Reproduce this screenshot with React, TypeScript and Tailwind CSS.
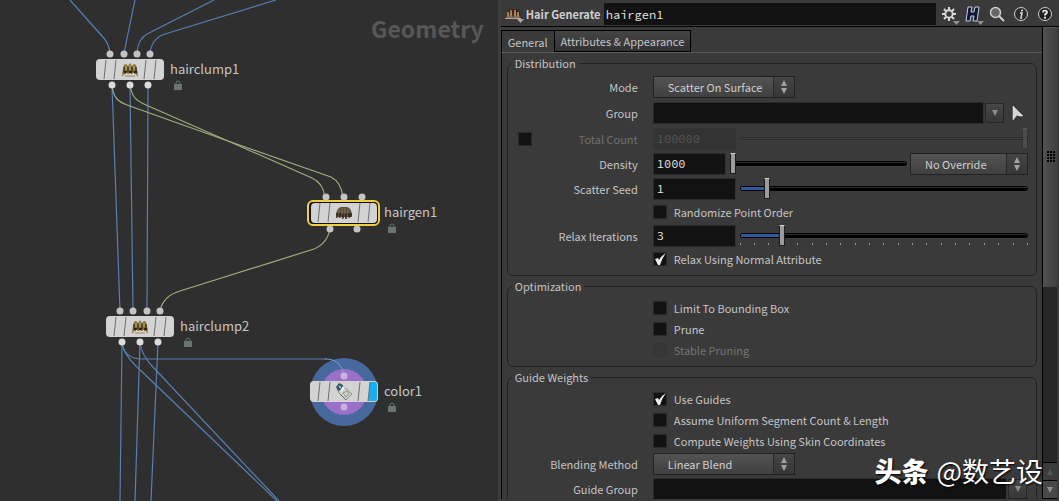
import { useState, type CSSProperties, type ReactNode } from 'react'

type NodeIconId = 'clump' | 'gen' | 'color'

interface NetNode {
  name: string
  x: number
  y: number
  inputs: number[]
  outputs: number[]
  icon: NodeIconId
  selected?: boolean
  display?: boolean
}

// x / y is the top left corner of the tile, connectors are offsets along it
const NODES: NetNode[] = [
  { name: 'hairclump1', x: 96, y: 59, inputs: [14, 28, 41, 54], outputs: [16, 34, 52], icon: 'clump' },
  { name: 'hairgen1', x: 310, y: 202, inputs: [16, 34, 52], outputs: [20, 47], icon: 'gen', selected: true },
  { name: 'hairclump2', x: 106, y: 316, inputs: [14, 27, 41, 54], outputs: [16, 34, 52], icon: 'clump' },
  { name: 'color1', x: 310, y: 381, inputs: [34], outputs: [34], icon: 'color', display: true },
]

const BLUE_WIRES = [
  'M70 0 L102 36 Q109 43 110 53',
  'M135 0 L124 53',
  'M214 0 L147 34 Q138 39 137 53',
  'M276 0 L165 34 Q152 38 150 53',
  'M112 85 L120 311',
  'M130 85 L133 311',
  'M148 85 L147 311',
  'M122 342 L120 501',
  'M140 342 L135 501',
  'M158 342 L151 501',
  'M122 342 Q122 352 136 366 L277 501',
  'M140 342 Q141 354 152 366 L279 501',
  'M122 342 Q124 359 142 359 H326',
]

const GREEN_WIRES = [
  'M112 85 C113 98 119 102 127 105 L228 141 L331 177 Q341 182 343 197',
  'M130 85 C132 98 137 101 146 105 L228 141 L312 178 Q323 183 325 197',
  'M330 228 Q328 243 314 249 L180 291 Q163 296 160 311',
]

function ClumpGlyph() {
  return (
    <g>
      <path d="M1 12 L3 3 L5 2 L7 4 L9 1 L11 4 L13 2 L15 3 L17 12 Z" fill="#85703a" />
      <path d="M3 10 V5 M7 10 V5 M11 10 V5 M15 10 V5" stroke="#4a3a1c" strokeWidth="1.5" />
      <path d="M3 10 H6 M8 10 H11 M13 10 H16" stroke="#2c2416" strokeWidth="2" />
      <path d="M5 4 V8 M9 3 V8 M13 4 V8" stroke="#c4ad6c" />
      <path d="M5 13 L6 11 M9 13 V11 M13 13 L12 11" stroke="#e2d8c0" strokeWidth="1.2" />
      <path d="M1 14 L3 12 M4 14 H14 M15 12 L17 14" stroke="#9d8250" strokeWidth="1.2" fill="none" />
    </g>
  )
}

function GenGlyph() {
  return (
    <g>
      <path d="M1 9 Q2 3 6 2 H12 Q16 3 17 9 L16 12 H2 Z" fill="#5a4e3c" />
      <path d="M2 8 V13 M5 8 V13 M8 9 V14 M11 9 V14 M14 8 V13 M16 8 V12" stroke="#32291c" strokeWidth="1.6" />
      <path d="M4 4 V8 M7 3 V8 M10 3 V8 M13 4 V8" stroke="#84745a" />
      <path d="M3 12 V14 M6 12 V14 M9 13 V14 M13 12 V14" stroke="#cfc5b5" />
    </g>
  )
}

function ColorGlyph() {
  return (
    <g>
      <path d="M2 3 L5 0 L9 3 L17 10 L11 16 L4 9 Z" fill="#cdd1ca" stroke="#87939a" strokeWidth="1" />
      <path d="M1 3 L4 -1 L8 1 L6 6 L3 7 Z" fill="#37586a" />
      <path d="M4 2 L6 4" stroke="#b9d5e0" strokeWidth="1.5" />
      <path d="M6 7 L9 3" stroke="#f2f8fa" strokeWidth="2" />
      <path d="M8 9 L12 7 L14 10 L11 13 Z" stroke="#8c9a80" fill="none" />
      <path d="M5 10 L11 16" stroke="#5a7080" strokeWidth="1" />
    </g>
  )
}

const NODE_GLYPHS: Record<NodeIconId, typeof ClumpGlyph> = {
  clump: ClumpGlyph,
  gen: GenGlyph,
  color: ColorGlyph,
}

function NodeTile({ node }: { node: NetNode }) {
  const Glyph = NODE_GLYPHS[node.icon]
  const dot = node.display ? '#c9b3dc' : '#c4c4c4'
  return (
    <div className="absolute" style={{ left: node.x, top: node.y }}>
      <svg width="68" height="22" className="block overflow-visible">
        {node.display && (
          <>
            <circle cx="34" cy="11" r="34" fill="#46689c" />
            <circle cx="34" cy="11" r="23" fill="#9a70c8" />
            <path d="M15 -22 H18 Q31 -21 34 -6" stroke="#7ba0d2" fill="none" />
          </>
        )}
        {node.selected && <rect x="-2" y="-1" width="71" height="24" rx="5" fill="#111" stroke="#f2cf3f" strokeWidth="2" />}
        {node.inputs.map(x => <circle key={x} cx={x} cy="-5" r="3.5" fill={dot} />)}
        {node.outputs.map(x => <circle key={x} cx={x} cy={node.selected ? 27 : 26} r="3.5" fill={node.display || node.selected ? dot : '#dcdcdc'} />)}
        <rect x={node.selected ? 1 : 0} y={node.selected ? 1 : 0} width={node.selected ? 66 : 68} height={node.selected ? 20 : 21} rx="4" fill="#d3d3d3" />
        {node.display && <path d="M60 1 H65 Q67 1 67 4 V17 Q67 20 65 20 H58 Z" fill="#18aef0" />}
        <path d="M10 1 L8 20 M20 1 L18 20 M50 1 L48 20 M60 1 L58 20" stroke="#6f6f6f" strokeWidth="1" />
        <g transform="translate(25 3)">
          <Glyph />
        </g>
      </svg>
      <span className="absolute left-[74px] top-0 text-[13px] leading-5 whitespace-nowrap text-[#c6c6c6]">{node.name}</span>
      <svg width="8" height="10" viewBox="0 0 8 10" className="absolute left-[78px] top-[21px]">
        <path d="M2 4 V3 a2 2 0 0 1 4 0 V4" fill="none" stroke="#69736f" />
        <rect x="0" y="4" width="8" height="6" fill="#69736f" />
      </svg>
    </div>
  )
}

function NetworkView() {
  return (
    <main className="relative flex-1 min-w-0 overflow-hidden bg-[#2f2f2f]">
      <h1 className="absolute right-[14px] top-3 text-[23px] leading-8 font-bold text-[#575757]">Geometry</h1>
      <svg className="absolute inset-0 w-full h-full" fill="none">
        {BLUE_WIRES.map(d => <path key={d} d={d} stroke="#597eb0" strokeWidth="1.2" />)}
        {GREEN_WIRES.map(d => <path key={d} d={d} stroke="#9cae7e" strokeWidth="1.2" />)}
      </svg>
      {NODES.map(node => <NodeTile key={node.name} node={node} />)}
    </main>
  )
}

function Group({ title, children }: { title: string; children: ReactNode }) {
  return (
    <fieldset className="min-w-0 rounded-md border border-[#232323] pt-1 pb-1.5 pr-2">
      <legend className="ml-1 px-[3px] leading-[14px]">{title}</legend>
      {children}
    </fieldset>
  )
}

function Row({ label, id, disabled, lead, height = 'h-[25px]', children }: {
  label?: string
  id?: string
  disabled?: boolean
  lead?: ReactNode
  height?: string
  children: ReactNode
}) {
  return (
    <div className={`flex items-center ${height}`}>
      <div className="w-[130px] mr-[15px] flex-shrink-0 flex items-center">
        {lead}
        {label && <label htmlFor={id} className={`ml-auto ${disabled ? 'text-[#6f6f6f]' : ''}`}>{label}</label>}
      </div>
      {children}
    </div>
  )
}

function CheckBox({ id, defaultChecked, disabled, label }: { id: string; defaultChecked?: boolean; disabled?: boolean; label?: string }) {
  const [checked, setChecked] = useState(!!defaultChecked)
  return (
    <span className="relative flex items-center">
      <input
        id={id}
        type="checkbox"
        checked={checked}
        disabled={disabled}
        aria-label={label}
        onChange={e => setChecked(e.target.checked)}
        className="appearance-none w-3.5 h-3.5 border border-[#2a2a2a] bg-[#121212] disabled:bg-[#363636] disabled:border-[#343434]"
      />
      {checked && (
        <svg width="14" height="14" viewBox="0 0 14 14" className="absolute inset-0 pointer-events-none">
          <path d="M2 7 L5 6 L6 8 Q8 4 13 1 Q9 6 7 13 L5 13 Z" fill="#ececec" />
        </svg>
      )}
    </span>
  )
}

function CheckRow({ id, label, checked, disabled, height = 'h-[21px]' }: {
  id: string
  label: string
  checked?: boolean
  disabled?: boolean
  height?: string
}) {
  return (
    <Row height={height}>
      <CheckBox id={id} defaultChecked={checked} disabled={disabled} />
      <label htmlFor={id} className={`ml-[7px] ${disabled ? 'text-[#757575]' : ''}`}>{label}</label>
    </Row>
  )
}

function Field({ id, value, width, disabled }: { id: string; value?: string; width: string; disabled?: boolean }) {
  return (
    <input
      id={id}
      type="text"
      defaultValue={value}
      disabled={disabled}
      className={`${width} h-[22px] min-w-0 px-[3px] border border-[#2b2b2b] border-r-[#333] bg-[#121212] font-['Source_Code_Pro','Liberation_Mono',monospace] text-xs text-[#e8e8e8] outline-none disabled:bg-[#333] disabled:border-[#353535] disabled:text-[#555]`}
    />
  )
}

function Slider({ label, value, max, ticks, disabled }: { label: string; value: number; max: number; ticks?: boolean; disabled?: boolean }) {
  const [current, setCurrent] = useState(value)
  const fill: CSSProperties = { width: `${(current / max) * 100}%` }
  return (
    <div className="relative flex-1 min-w-0 h-[22px] flex items-center">
      {disabled ? (
        <div className="w-full ml-1 h-[3px] border border-[#2e2e2e] bg-[#3d3d3d]" />
      ) : (
        <div className="w-full ml-1 h-[5px] rounded-sm border border-black bg-black">
          <div className="h-px bg-[#2b2b2b]">
            <div className="h-[3px] bg-[#2c5c9e]" style={fill} />
          </div>
        </div>
      )}
      {ticks && (
        <div className="absolute left-1 right-0 bottom-0.5 flex justify-between">
          {Array.from({ length: 21 }, (_, i) => <span key={i} className="w-px h-0.5 bg-[#9a9a9a]" />)}
        </div>
      )}
      <input
        type="range"
        min={0}
        max={max}
        value={current}
        disabled={disabled}
        aria-label={label}
        onChange={e => setCurrent(Number(e.target.value))}
        className="absolute inset-0 w-full h-full appearance-none bg-transparent disabled:opacity-20 [&::-webkit-slider-thumb]:appearance-none [&::-webkit-slider-thumb]:w-1.5 [&::-webkit-slider-thumb]:h-[21px] [&::-webkit-slider-thumb]:border [&::-webkit-slider-thumb]:border-[#1c1c1c] [&::-webkit-slider-thumb]:border-t-[#d0d0d0] [&::-webkit-slider-thumb]:bg-[#9c9c9c]"
      />
    </div>
  )
}

function Menu({ id, options, width, name }: { id: string; options: string[]; width: string; name?: string }) {
  return (
    <div className={`relative flex-shrink-0 h-[22px] ${width}`}>
      <select
        id={id}
        aria-label={name}
        className="appearance-none w-full h-full pl-3.5 border border-[#222] bg-linear-to-b from-[#535353] to-[#404040] text-[#cfcfcf] outline-none"
      >
        {options.map(o => <option key={o}>{o}</option>)}
      </select>
      <span className="absolute right-px top-px bottom-px w-[21px] flex items-center justify-center border-l border-[#2a2a2a] bg-linear-to-b from-[#454545] to-[#363636] pointer-events-none">
        <svg width="8" height="14" viewBox="0 0 8 14" fill="#a0a0a0">
          <path d="M4 0 L7 6 H1 Z M4 14 L1 8 H7 Z" />
        </svg>
      </span>
    </div>
  )
}

function DropButton({ label }: { label: string }) {
  return (
    <button aria-label={label} className="w-[19px] h-5 mx-px flex-shrink-0 flex items-center justify-center border border-[#262626] bg-linear-to-b from-[#474747] to-[#373737]">
      <svg width="6" height="6" viewBox="0 0 6 6"><path d="M0 0 H6 L3 6 Z" fill="#8c8c8c" /></svg>
    </button>
  )
}

function PickArrow() {
  return (
    <button aria-label="Select from viewport" className="ml-[7px] mr-1 flex-shrink-0">
      <svg width="12" height="16" viewBox="0 0 12 16" className="block">
        <path d="M1 1 L11 11 L7 11 L5 10 L1 15 Z" fill="#d6d6d6" stroke="#eee" strokeWidth="0.5" />
      </svg>
    </button>
  )
}

const CORNER = <path d="M12 15 H19 L15.5 19 Z" fill="#8f8f8f" />

const TOOLS: { label: string; glyph: ReactNode }[] = [
  {
    label: 'Settings',
    glyph: (
      <>
        <path d="M8 1 V4 M8 12 V15 M1 8 H4 M12 8 H15 M3 3 L5 5 M11 11 L13 13 M13 3 L11 5 M5 11 L3 13" stroke="#d8d8d8" strokeWidth="2" />
        <circle cx="8" cy="8" r="3.7" fill="none" stroke="#d8d8d8" strokeWidth="2" />
        {CORNER}
      </>
    ),
  },
  {
    label: 'Help card',
    glyph: (
      <>
        <path d="M3 1 H7 L6 6 H9 L10 1 H14 L12 15 H8 L9 10 H6 L5 15 H1 Z" fill="#0e1733" stroke="#c4cfe8" />
        {CORNER}
      </>
    ),
  },
  {
    label: 'Search',
    glyph: (
      <>
        <circle cx="6.5" cy="6.5" r="5" fill="#666" stroke="#cfcfcf" strokeWidth="1.5" />
        <path d="M10 10 L15 15" stroke="#cfcfcf" strokeWidth="2" />
      </>
    ),
  },
  {
    label: 'Info',
    glyph: (
      <>
        <circle cx="8" cy="8" r="6.5" fill="#2c2c2c" stroke="#cfcfcf" />
        <path d="M7 7 H9 L8 12 H9" stroke="#dcdcdc" strokeWidth="1.5" fill="none" />
        <circle cx="9" cy="4.5" r="1.1" fill="#dcdcdc" />
      </>
    ),
  },
  {
    label: 'Help',
    glyph: (
      <>
        <circle cx="8" cy="8" r="6.5" fill="#1d1d1d" stroke="#cfcfcf" />
        <path d="M6 6.5 Q6 4.5 8 4.5 Q10 4.5 10 6.5 Q9.5 7.5 8 8.5 V9.5" stroke="#f0f0f0" strokeWidth="1.7" fill="none" />
        <circle cx="8" cy="11.7" r="1.1" fill="#f0f0f0" />
      </>
    ),
  },
]

function ParameterHeader() {
  return (
    <header className="flex items-center h-[27px] pt-0.5 pr-1 border-b border-black bg-[#3a3a3a]">
      <svg width="20" height="20" viewBox="0 0 20 20" className="ml-1 flex-shrink-0">
        <path d="M1 12 Q2 6 5 5 L12 5 Q15 6 16 12 Z" fill="#3e2415" />
        <path d="M2 14 L3 8 L4 14 M5 14 L6 6 L7 14 M9 14 L10 6 L11 14 M12 14 L13 8 L14 14" stroke="#c9ab84" strokeWidth="0.8" fill="none" />
        <path d="M0 14.5 H16" stroke="#c0a482" />
        <path d="M12 15 H19 L15.5 19 Z" fill="#a8a8a8" />
      </svg>
      <label htmlFor="node-name" className="ml-px w-[78px] flex-shrink-0 font-bold whitespace-nowrap text-[#d0d0d0]">Hair Generate</label>
      <input
        id="node-name"
        defaultValue="hairgen1"
        className="flex-1 min-w-0 h-[22px] px-0.5 bg-[#121212] font-['Source_Code_Pro','Liberation_Mono',monospace] text-xs text-[#e8e8e8] outline-none"
      />
      <div className="flex gap-1 ml-[3px]">
        {TOOLS.map(tool => (
          <button key={tool.label} aria-label={tool.label} className="w-5 h-5 flex items-center justify-center">
            <svg width="16" height="16" viewBox="0 0 16 16" className="overflow-visible">{tool.glyph}</svg>
          </button>
        ))}
      </div>
    </header>
  )
}

function ScrollBar() {
  return (
    <div className="w-[15px] mr-0.5 flex-shrink-0 flex flex-col border-l border-b border-black bg-[#262626]">
      <div className="h-[260px] border-t border-[#5a5a5a] bg-linear-to-r from-[#525252] to-[#3f3f3f]" />
      <div className="flex-1" />
      <button aria-label="Scroll up" className="h-[18px] flex items-center justify-center border-t border-black bg-[#3c3c3c]">
        <svg width="6" height="6"><path d="M0 6 H6 L3 0 Z" fill="#555" /></svg>
      </button>
      <button aria-label="Scroll down" className="h-[18px] flex items-center justify-center border-t border-black bg-[#484848]">
        <svg width="6" height="6"><path d="M0 0 H6 L3 6 Z" fill="#909090" /></svg>
      </button>
    </div>
  )
}

function GeneralTab() {
  return (
    <div className="px-[5px] pt-[3px] space-y-[3px]">
      <Group title="Distribution">
        <Row label="Mode" id="mode" height="h-[26px]">
          <Menu id="mode" width="w-[142px]" options={['Scatter On Surface']} />
        </Row>
        <Row label="Group" id="group" height="h-[26px]">
          <Field id="group" width="flex-1" />
          <DropButton label="Group menu" />
          <PickArrow />
        </Row>
        <Row label="Total Count" id="total" disabled lead={<span className="ml-2.5"><CheckBox id="use-total" label="Use total count" /></span>}>
          <Field id="total" value="100000" width="w-[83px]" disabled />
          <Slider label="Total Count slider" value={10} max={10} disabled />
        </Row>
        <Row label="Density" id="density">
          <Field id="density" value="1000" width="w-[73px]" />
          <span className="w-1" />
          <Slider label="Density slider" value={0} max={10} />
          <span className="w-[3px]" />
          <Menu id="density-override" name="Density override" width="w-[118px]" options={['No Override']} />
        </Row>
        <Row label="Scatter Seed" id="seed">
          <Field id="seed" value="1" width="w-[83px]" />
          <Slider label="Scatter Seed slider" value={1} max={10} />
        </Row>
        <CheckRow id="randomize" label="Randomize Point Order" height="h-[22px]" />
        <Row label="Relax Iterations" id="relax">
          <Field id="relax" value="3" width="w-[83px]" />
          <Slider label="Relax Iterations slider" value={3} max={20} ticks />
        </Row>
        <CheckRow id="relax-normal" label="Relax Using Normal Attribute" checked />
      </Group>

      <Group title="Optimization">
        <CheckRow id="limit" label="Limit To Bounding Box" />
        <CheckRow id="prune" label="Prune" />
        <CheckRow id="stable" label="Stable Pruning" disabled />
      </Group>

      <Group title="Guide Weights">
        <CheckRow id="guides" label="Use Guides" checked />
        <CheckRow id="uniform" label="Assume Uniform Segment Count &amp; Length" />
        <CheckRow id="skin" label="Compute Weights Using Skin Coordinates" />
        <Row label="Blending Method" id="blend">
          <Menu id="blend" width="w-[142px]" options={['Linear Blend']} />
        </Row>
        <Row label="Guide Group" id="guide-group" height="h-[26px]">
          <Field id="guide-group" width="flex-1" />
          <DropButton label="Guide group menu" />
        </Row>
      </Group>
    </div>
  )
}

function ParameterPane() {
  return (
    <aside className="w-[53%] flex-shrink-0 flex flex-col border-l-[3px] border-[#3d3d3d] bg-[#3a3a3a]">
      <ParameterHeader />
      <div className="relative flex-1 min-h-0 flex mb-0.5">
        <div className="flex-1 min-w-0 overflow-hidden flex flex-col pt-[3px]">
          <nav role="tablist" className="flex flex-shrink-0 h-[23px] border-b border-[#5c5c5c] border-l border-l-black">
            <button role="tab" aria-selected="true" className="px-1.5 border-t border-black">General</button>
            <button role="tab" aria-selected="false" className="px-1.5 border border-black bg-linear-to-b from-[#454545] to-[#323232]">
              Attributes &amp; Appearance
            </button>
          </nav>
          <div className="flex-1 min-h-0 overflow-hidden border-l border-black">
            <GeneralTab />
          </div>
        </div>
        <ScrollBar />
        <div className="absolute right-1 top-[124px] grid grid-cols-3 gap-px">
          {Array.from({ length: 12 }, (_, i) => <span key={i} className="w-0.5 h-0.5 bg-black" />)}
        </div>
      </div>
    </aside>
  )
}

export default function App() {
  return (
    <div className="relative flex h-screen overflow-hidden bg-[#3a3a3a] font-['Noto_Sans_CJK_SC',sans-serif] text-[11px] leading-4 text-[#c4c4c4]">
      <NetworkView />
      <ParameterPane />
      <p className="absolute right-4 bottom-3 flex items-center gap-2 text-[27px] leading-9 text-white [text-shadow:1px_1px_2px_#000] pointer-events-none">
        <span className="font-black">头条</span>
        <span>@数艺设</span>
      </p>
    </div>
  )
}
